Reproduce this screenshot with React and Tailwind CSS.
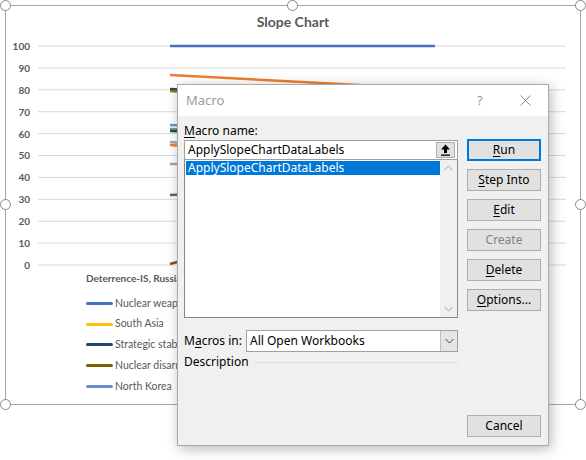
import React from "react";

const Handle = ({ className }) => (
  <div className={`absolute w-[11px] h-[11px] rounded-full bg-white border-[1.5px] border-[#8a8a8a] ${className}`} />
);

const yLabels = ["100", "90", "80", "70", "60", "50", "40", "30", "20", "10", "0"];

const legend = [
  { c: "#4472C4", t: "Nuclear weapons policy" },
  { c: "#FFC000", t: "South Asia" },
  { c: "#264478", t: "Strategic stability" },
  { c: "#7F6000", t: "Nuclear disarmament" },
  { c: "#698ED0", t: "North Korea" },
];

// page coords -> svg coords (origin at x=38, y=40)
const lines = [
  { c: "#4472C4", p: [170, 46, 435, 46] },
  { c: "#ED7D31", p: [170, 75, 435, 89] },
  { c: "#264478", p: [170, 89, 220, 92] },
  { c: "#997300", p: [170, 91, 220, 94] },
  { c: "#5B9BD5", p: [170, 125, 220, 127] },
  { c: "#70AD47", p: [170, 129, 220, 131] },
  { c: "#264478", p: [170, 131, 220, 133] },
  { c: "#A5A5A5", p: [170, 142, 220, 146] },
  { c: "#ED7D31", p: [170, 145, 220, 149] },
  { c: "#A5A5A5", p: [170, 164, 220, 164] },
  { c: "#636363", p: [170, 195, 220, 193] },
  { c: "#9E480E", p: [170, 264, 220, 250] },
];

function Chart() {
  return (
    <div className="relative ml-[5px] mt-[5px] w-[576px] h-[400px] border border-[#a6a6a6]">
      <Handle className="-left-[6px] -top-[6px]" />
      <Handle className="left-[281px] -top-[6px]" />
      <Handle className="-right-[6px] -top-[6px]" />
      <Handle className="-left-[6px] top-[193px]" />
      <Handle className="-right-[6px] top-[193px]" />
      <Handle className="-left-[6px] -bottom-[6px]" />
      <Handle className="left-[281px] -bottom-[6px]" />
      <Handle className="-right-[6px] -bottom-[6px]" />

      <div className="h-[34px] pt-[7px] text-center text-[14px] leading-[18px] font-bold text-[#595959] [font-family:'Lato',sans-serif]">
        Slope Chart
      </div>

      <div className="flex">
        <div className="w-[24px] h-[231px] flex flex-col justify-between items-end text-[10px] leading-[12px] font-bold text-[#595959] [font-family:'Lato',sans-serif]">
          {yLabels.map((l) => (
            <div key={l}>{l}</div>
          ))}
        </div>
        <svg className="ml-[8px]" width="528" height="231" viewBox="0 0 528 231">
          {yLabels.map((l, i) => (
            <line key={l} x1="0" x2="528" y1={6 + i * 21.9} y2={6 + i * 21.9} stroke="#d9d9d9" strokeWidth="1" />
          ))}
          {lines.map((ln, i) => (
            <line
              key={i}
              x1={ln.p[0] - 38}
              y1={ln.p[1] - 40}
              x2={ln.p[2] - 38}
              y2={ln.p[3] - 40}
              stroke={ln.c}
              strokeWidth="2.5"
            />
          ))}
        </svg>
      </div>

      <div className="pl-[80px] [font-family:'Lato',sans-serif] text-[#595959]">
        <div className="text-[10px] leading-[14px] font-bold whitespace-nowrap">Deterrence-IS, Russia, China, Iran</div>
        <div className="mt-[8px] flex flex-col">
          {legend.map((l) => (
            <div key={l.t} className="h-[20.8px] flex items-center text-[10.5px] whitespace-nowrap">
              <div className="w-[27px] h-[3px] rounded-full" style={{ background: l.c }} />
              <span className="ml-[2px]">{l.t}</span>
            </div>
          ))}
        </div>
      </div>
    </div>
  );
}

const Btn = ({ children, primary, disabled }) => (
  <div
    className={`h-[22px] w-[74px] flex items-center justify-center bg-[#e1e1e1] text-[12px] leading-[16px] ${
      primary ? "border-2 border-[#0078d7]" : "border border-[#adadad]"
    } ${disabled ? "text-[#838383]" : "text-black"}`}
  >
    {children}
  </div>
);

function Dialog() {
  return (
    <div className="absolute left-[177px] top-[84px] w-[372px] h-[362px] border border-[#aaaaaa] bg-[#f0f0f0] flex flex-col shadow-[2px_3px_12px_rgba(0,0,0,0.28)] [font-family:'Noto_Sans',sans-serif]">
      <div className="h-[31px] bg-white flex items-center pl-[8px] relative">
        <span className="text-[13px] text-[#9a9a9a]">Macro</span>
        <span className="absolute left-[299px] top-[6px] text-[13px] text-[#9a9a9a]">?</span>
        <svg className="absolute left-[342px] top-[10px]" width="11" height="11" viewBox="0 0 11 11">
          <path d="M0.5 0.5 L10.5 10.5 M10.5 0.5 L0.5 10.5" stroke="#8a8a8a" strokeWidth="1" />
        </svg>
      </div>
      <div className="flex-1 flex pl-[6px] pr-[6px] pt-[7px] pb-[8px]">
        <div className="w-[274px] flex flex-col">
          <div className="h-[17px] text-[12px] leading-[16px] text-black">
            <span className="underline underline-offset-2">M</span>acro name:
          </div>
          <div className="h-[20px] bg-white border border-[#a0a0a0] flex items-center relative">
            <span className="pl-[3px] text-[12px] leading-[16px] text-black">ApplySlopeChartDataLabels</span>
            <div className="absolute right-[2px] top-[1px] w-[19px] h-[16px] bg-[#e1e1e1] border border-[#adadad] flex items-center justify-center">
              <svg width="11" height="12" viewBox="0 0 11 12">
                <path d="M5.5 0.5 L10 5.5 L7 5.5 L7 9 L4 9 L4 5.5 L1 5.5 Z" fill="#000" />
                <rect x="1" y="10.5" width="9" height="1.3" fill="#000" />
              </svg>
            </div>
          </div>
          <div className="h-[158px] bg-white border border-[#828790] border-t-0 flex">
            <div className="flex-1 pl-[1px] pt-[1px]">
              <div className="h-[14px] bg-[#0078d7] text-white text-[12px] leading-[14px] pl-[2px]">
                ApplySlopeChartDataLabels
              </div>
            </div>
            <div className="w-[17px] bg-[#f0f0f0] flex flex-col justify-between items-center py-[5px]">
              <svg width="9" height="6" viewBox="0 0 9 6">
                <path d="M0.5 5 L4.5 1 L8.5 5" stroke="#c2c2c2" strokeWidth="1.2" fill="none" />
              </svg>
              <svg width="9" height="6" viewBox="0 0 9 6">
                <path d="M0.5 1 L4.5 5 L8.5 1" stroke="#c2c2c2" strokeWidth="1.2" fill="none" />
              </svg>
            </div>
          </div>
          <div className="mt-[12px] h-[22px] flex items-center">
            <div className="w-[62px] text-[12px] leading-[16px] text-black whitespace-nowrap">
              M<span className="underline underline-offset-2">a</span>cros in:
            </div>
            <div className="flex-1 h-[22px] bg-white border border-[#a0a0a0] flex items-center">
              <span className="flex-1 pl-[3px] text-[12px] leading-[16px] text-black">All Open Workbooks</span>
              <div className="w-[17px] h-[20px] bg-[#e5e5e5] border-l border-[#c0c0c0] flex items-center justify-center">
                <svg width="9" height="6" viewBox="0 0 9 6">
                  <path d="M0.5 1 L4.5 5 L8.5 1" stroke="#404040" strokeWidth="1" fill="none" />
                </svg>
              </div>
            </div>
          </div>
          <div className="mt-[2px] h-[16px] flex items-center">
            <span className="text-[12px] leading-[16px] text-black">Description</span>
            <div className="flex-1 ml-[6px] h-px bg-[#dcdcdc]" />
          </div>
        </div>
        <div className="ml-[9px] mt-[16px] flex flex-col gap-[8px]">
          <Btn primary>
            <span><span className="underline underline-offset-2">R</span>un</span>
          </Btn>
          <Btn>
            <span><span className="underline underline-offset-2">S</span>tep Into</span>
          </Btn>
          <Btn>
            <span><span className="underline underline-offset-2">E</span>dit</span>
          </Btn>
          <Btn disabled>Create</Btn>
          <Btn>
            <span><span className="underline underline-offset-2">D</span>elete</span>
          </Btn>
          <Btn>
            <span><span className="underline underline-offset-2">O</span>ptions...</span>
          </Btn>
          <div className="mt-auto">
            <Btn>Cancel</Btn>
          </div>
        </div>
      </div>
    </div>
  );
}

export default function App() {
  return (
    <div className="relative w-[586px] h-[460px] bg-white overflow-hidden">
      <Chart />
      <Dialog />
    </div>
  );
}
